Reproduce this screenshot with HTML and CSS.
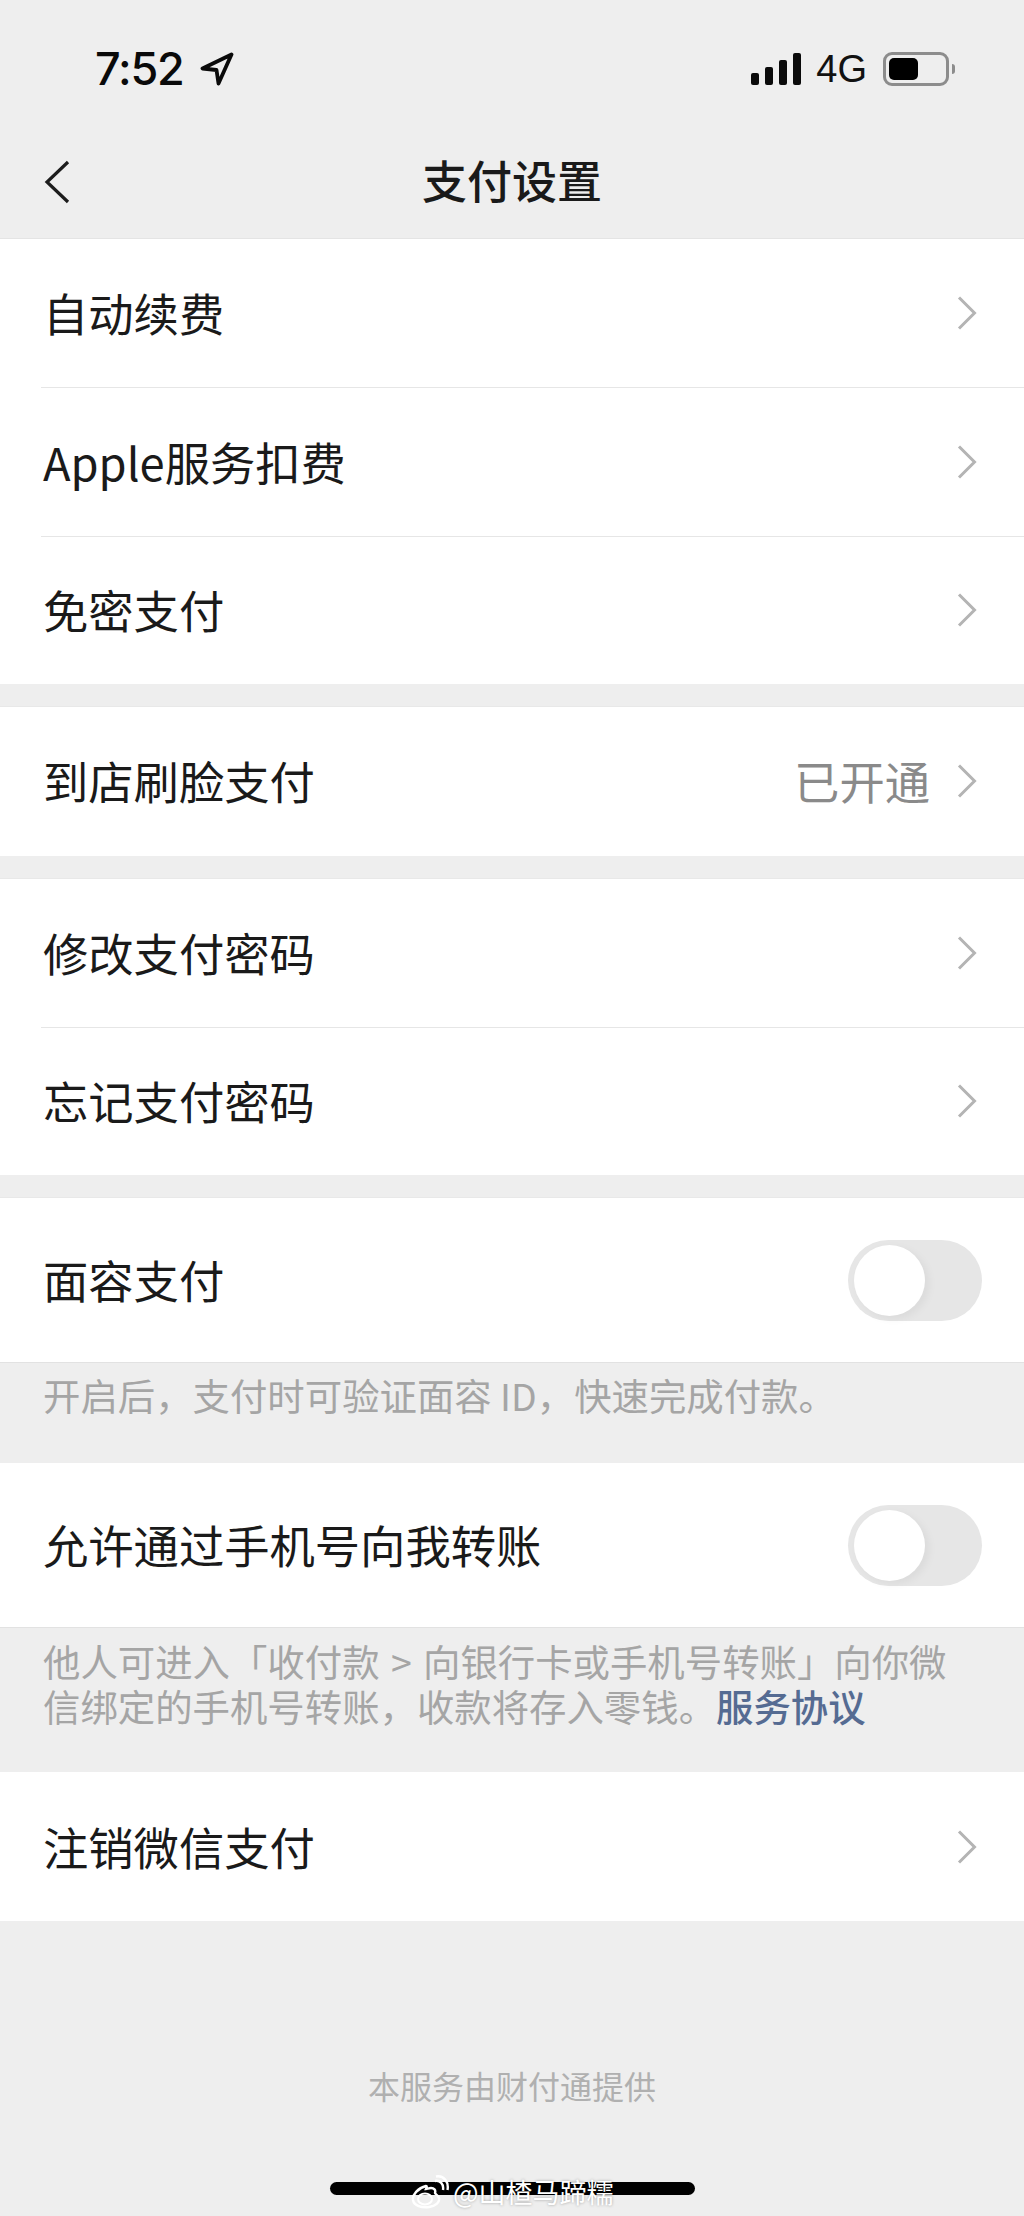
FILE: index.html
```html
<!DOCTYPE html>
<html lang="zh-CN">
<head>
<meta charset="utf-8">
<title>支付设置</title>
<link rel="stylesheet" href="styles.css">
</head>
<body>
<svg class="defs" width="0" height="0" aria-hidden="true"><defs>
<symbol id="chev" viewBox="0 0 20 34"><path d="M2 1.500 L17.500 17 L2 32.500" fill="none" stroke="#b4b4b4" stroke-width="3"/></symbol>
</defs></svg>
<div class="page">
  <header class="top">
    <div class="status">
      <div class="status-left">
        <span class="time">7:52</span>
        <svg class="loc" viewBox="0 0 34 34"><path d="M31.500 2.500 L2.500 16.500 L16.500 18 L18.500 31.500 Z" fill="none" stroke="#0a0a0a" stroke-width="3.800" stroke-linejoin="round"/></svg>
      </div>
      <div class="status-right">
        <div class="signal"><i class="b1"></i><i class="b2"></i><i class="b3"></i><i class="b4"></i></div>
        <span class="net">4G</span>
        <div class="battery"><div class="battery-fill"></div></div>
        <div class="battery-tip"></div>
      </div>
    </div>
    <nav class="nav">
      <svg class="back" viewBox="0 0 26 44"><path d="M24 2 L3 22 L24 42" fill="none" stroke="#1c1c1c" stroke-width="3.200"/></svg>
      <h1 class="title">支付设置</h1>
    </nav>
  </header>

  <section class="group g1">
    <div class="row"><span class="label">自动续费</span><svg class="chev"><use href="#chev"/></svg></div>
    <div class="row"><span class="label">Apple服务扣费</span><svg class="chev"><use href="#chev"/></svg></div>
    <div class="row"><span class="label">免密支付</span><svg class="chev"><use href="#chev"/></svg></div>
  </section>

  <section class="group g2">
    <div class="row"><span class="label">到店刷脸支付</span><span class="value">已开通</span><svg class="chev"><use href="#chev"/></svg></div>
  </section>

  <section class="group g3">
    <div class="row"><span class="label">修改支付密码</span><svg class="chev"><use href="#chev"/></svg></div>
    <div class="row"><span class="label">忘记支付密码</span><svg class="chev"><use href="#chev"/></svg></div>
  </section>

  <section class="group g4">
    <div class="row row-tall"><span class="label">面容支付</span><div class="toggle"><div class="knob"></div></div></div>
  </section>
  <p class="note note-one">开启后，支付时可验证面容 ID，快速完成付款。</p>

  <section class="group">
    <div class="row row-tall"><span class="label">允许通过手机号向我转账</span><div class="toggle"><div class="knob"></div></div></div>
  </section>
  <p class="note note-two">他人可进入「收付款 &gt; 向银行卡或手机号转账」向你微信绑定的手机号转账，收款将存入零钱。<a class="link">服务协议</a></p>

  <section class="group">
    <div class="row"><span class="label">注销微信支付</span><svg class="chev"><use href="#chev"/></svg></div>
  </section>

  <footer class="foot">本服务由财付通提供</footer>
  <div class="home-bar"></div>
  <div class="mark">
    <svg class="weibo" viewBox="0 0 38 34"><path d="M15 11 C7 13 1 20 2 25 C3 31 11 33 18 32 C25 31 29 27 28 23 C27 20 24 19 24 18 C25 15 23 13 20 13 C18 13 16 14 15 14 C16 12 16 11 15 11 Z" fill="none" stroke="#fff" stroke-width="2.400"/><ellipse cx="14" cy="24" rx="7" ry="5.500" fill="none" stroke="#fff" stroke-width="2"/><path d="M24 6 C29 5 33 9 32 15 M25 1.500 C33 0 38 7 36.500 15" fill="none" stroke="#fff" stroke-width="2.400"/></svg>
    <span class="mark-text">@山楂马蹄糯</span>
  </div>
</div>
</body>
</html>
```
FILE: styles.css
```css
* { box-sizing: border-box; }
html, body { margin: 0; padding: 0; }
body {
  width: 1024px;
  height: 2216px;
  overflow: hidden;
  background: #eeeeee;
  font-family: "Noto Sans CJK SC", "Liberation Sans", sans-serif;
  color: #1a1a1a;
}
.defs { position: absolute; }
.page { position: relative; width: 1024px; height: 2216px; overflow: hidden; }

.top { height: 239px; background: #eeeeee; border-bottom: 1px solid #e4e4e4; }
.status { height: 118px; padding: 52px 69px 0 95px; display: flex; justify-content: space-between; align-items: flex-start; }
.status-left { display: flex; align-items: center; height: 33px; gap: 16px; }
.time { font-family: "Inter", "Liberation Sans", sans-serif; font-size: 45px; font-weight: 500; line-height: 33px; color: #0a0a0a; letter-spacing: -1.2px; }
.loc { width: 34px; height: 34px; flex: none; }
.status-right { display: flex; align-items: center; height: 34px; }
.signal { display: flex; align-items: flex-end; gap: 6px; height: 32px; }
.signal i { display: block; width: 8px; background: #0a0a0a; border-radius: 2px; }
.signal .b1 { height: 12px; }
.signal .b2 { height: 18px; }
.signal .b3 { height: 25px; }
.signal .b4 { height: 32px; }
.net { font-family: "Liberation Sans", sans-serif; font-size: 38px; line-height: 34px; margin-left: 15px; color: #111; }
.battery { width: 66px; height: 34px; margin-left: 16px; border: 3px solid #8c8c8c; border-radius: 9px; padding: 3px; }
.battery-fill { width: 29px; height: 100%; background: #000; border-radius: 5px; }
.battery-tip { width: 3px; height: 10px; margin-left: 3px; background: #8c8c8c; border-radius: 0 3px 3px 0; }

.nav { height: 120px; display: flex; align-items: center; justify-content: center; position: relative; padding-top: 4px; }
.back { position: absolute; left: 44px; top: 42px; width: 26px; height: 44px; }
.title { margin: 0; font-size: 45px; font-weight: 500; line-height: 60px; color: #1a1a1a; }

.group { background: #fff; }
.g2, .g3, .g4 { margin-top: 22px; border-top: 1px solid #e8e8e8; }
.row { position: relative; height: 148.4px; padding: 0 44px 0 43px; display: flex; align-items: center; }
.row + .row::before { content: ""; position: absolute; left: 41px; right: 0; top: 0; height: 1px; background: #e6e6e6; }
.row-tall { height: 165px; border-bottom: 1px solid #e2e2e2; }
.label { font-size: 45.3px; line-height: 60px; color: #1a1a1a; flex: 1; white-space: pre; margin-top: -2px; }
.value { font-size: 45.3px; line-height: 60px; color: #8a8a8a; margin-right: 27px; margin-top: -2px; }
.chev { width: 20px; height: 34px; flex: none; margin-right: 3px; }

.toggle { position: relative; width: 134px; height: 81px; border-radius: 41px; background: #e6e6e6; margin-right: -2px; flex: none; }
.knob { position: absolute; left: 6px; top: 5px; width: 71px; height: 71px; border-radius: 50%; background: #fff; box-shadow: 4px 3px 8px rgba(0,0,0,.05); }

.note { margin: 0; padding: 0 50px 0 43px; font-size: 37.4px; line-height: 45px; color: #a5a5a5; }
.note-one { height: 100px; padding-top: 10px; }
.note-two { height: 144px; padding-top: 11px; word-spacing: 3px; }
.link { color: #556b92; font-weight: 500; }

.foot { margin-top: 142px; text-align: center; font-size: 32px; line-height: 44px; color: #b0b0b0; }
.home-bar { position: absolute; left: 330px; top: 2182px; width: 365px; height: 13px; border-radius: 7px; background: #000; }
.mark { position: absolute; left: 411px; top: 2172px; display: flex; align-items: center; gap: 4px; height: 40px; color: #fff; text-shadow: 0 0 3px rgba(0,0,0,.35); }
.weibo { width: 38px; height: 34px; }
.mark-text { font-size: 27px; line-height: 40px; }
```
